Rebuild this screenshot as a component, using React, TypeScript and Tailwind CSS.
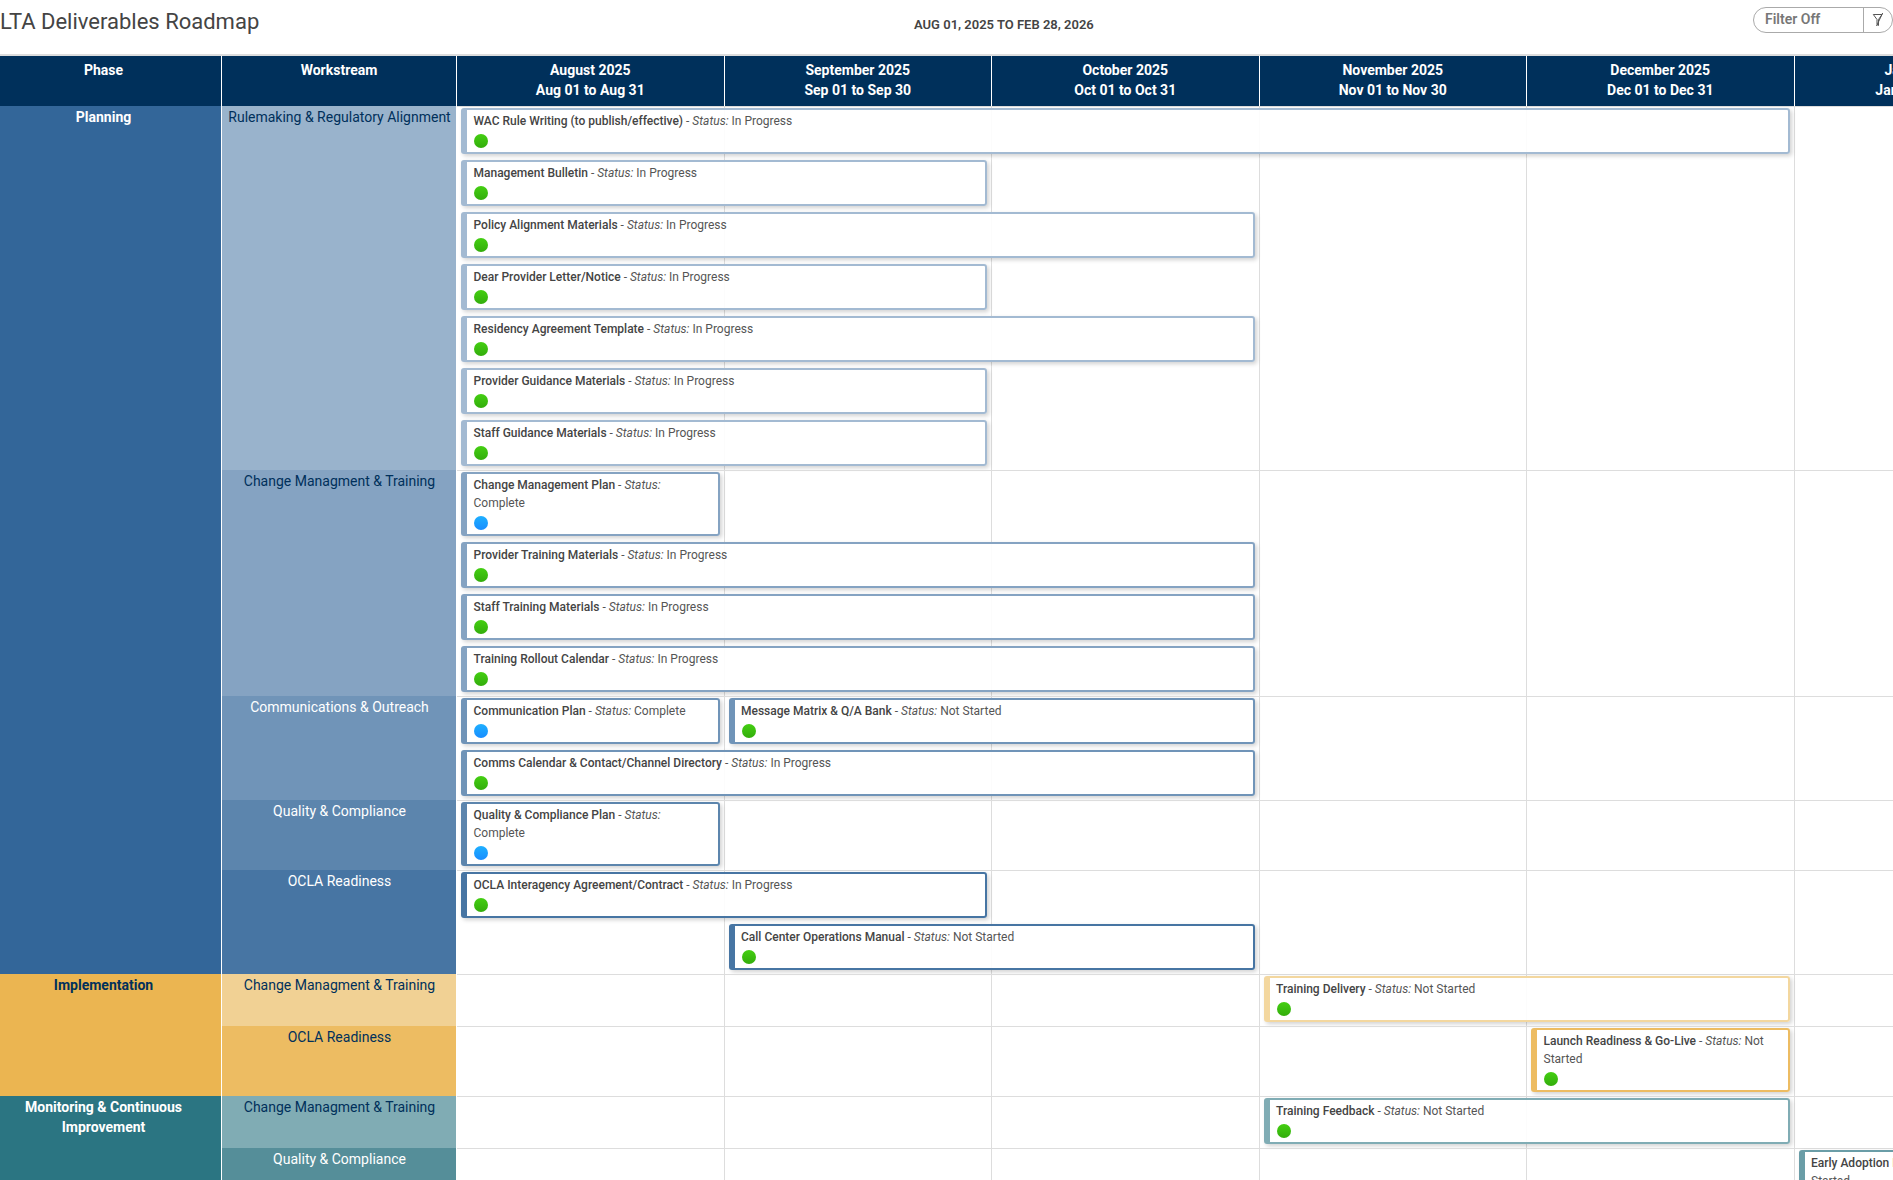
import React from "react";

type Deliverable = {
  title: string;
  status: string;
  start: number;
  span: number;
  tall?: boolean;
};

type Row = { cards: Deliverable[] };

type Workstream = {
  name: string;
  bg: string;
  text: string;
  border: string;
  rows: Row[];
};

const one = (title: string, status: string, start: number, span: number, tall = false): Row => ({
  cards: [{ title, status, start, span, tall }],
});

const START: Record<number, string> = {
  1: "col-start-1",
  2: "col-start-2",
  3: "col-start-3",
  4: "col-start-4",
  5: "col-start-5",
  6: "col-start-6",
  7: "col-start-7",
};

const SPAN: Record<number, string> = {
  1: "col-span-1",
  2: "col-span-2",
  3: "col-span-3",
  4: "col-span-4",
  5: "col-span-5",
};

const months = [
  ["August 2025", "Aug 01 to Aug 31"],
  ["September 2025", "Sep 01 to Sep 30"],
  ["October 2025", "Oct 01 to Oct 31"],
  ["November 2025", "Nov 01 to Nov 30"],
  ["December 2025", "Dec 01 to Dec 31"],
  ["January 2026", "Jan 01 to Jan 31"],
  ["February 2026", "Feb 01 to Feb 28"],
];

const phases = [
  {
    name: "Planning",
    bg: "bg-[#336699]",
    text: "text-white",
    streams: [
      {
        name: "Rulemaking & Regulatory Alignment",
        bg: "bg-[#99b3cc]",
        text: "text-[#00305b]",
        border: "border-[#a3bad2]",
        rows: [
          one("WAC Rule Writing (to publish/effective)", "In Progress", 1, 5),
          one("Management Bulletin", "In Progress", 1, 2),
          one("Policy Alignment Materials", "In Progress", 1, 3),
          one("Dear Provider Letter/Notice", "In Progress", 1, 2),
          one("Residency Agreement Template", "In Progress", 1, 3),
          one("Provider Guidance Materials", "In Progress", 1, 2),
          one("Staff Guidance Materials", "In Progress", 1, 2),
        ],
      },
      {
        name: "Change Managment & Training",
        bg: "bg-[#85a3c2]",
        text: "text-[#00305b]",
        border: "border-[#85a3c2]",
        rows: [
          one("Change Management Plan", "Complete", 1, 1, true),
          one("Provider Training Materials", "In Progress", 1, 3),
          one("Staff Training Materials", "In Progress", 1, 3),
          one("Training Rollout Calendar", "In Progress", 1, 3),
        ],
      },
      {
        name: "Communications & Outreach",
        bg: "bg-[#7094b8]",
        text: "text-white",
        border: "border-[#7094b8]",
        rows: [
          {
            cards: [
              { title: "Communication Plan", status: "Complete", start: 1, span: 1 },
              { title: "Message Matrix & Q/A Bank", status: "Not Started", start: 2, span: 2 },
            ],
          },
          one("Comms Calendar & Contact/Channel Directory", "In Progress", 1, 3),
        ],
      },
      {
        name: "Quality & Compliance",
        bg: "bg-[#5c85ad]",
        text: "text-white",
        border: "border-[#5c85ad]",
        rows: [one("Quality & Compliance Plan", "Complete", 1, 1, true)],
      },
      {
        name: "OCLA Readiness",
        bg: "bg-[#4775a3]",
        text: "text-white",
        border: "border-[#4775a3]",
        rows: [
          one("OCLA Interagency Agreement/Contract", "In Progress", 1, 2),
          one("Call Center Operations Manual", "Not Started", 2, 2),
        ],
      },
    ],
  },
  {
    name: "Implementation",
    bg: "bg-[#ebb551]",
    text: "text-[#00305b]",
    streams: [
      {
        name: "Change Managment & Training",
        bg: "bg-[#f1d194]",
        text: "text-[#00305b]",
        border: "border-[#f3d79f]",
        rows: [one("Training Delivery", "Not Started", 4, 2)],
      },
      {
        name: "OCLA Readiness",
        bg: "bg-[#edbc62]",
        text: "text-[#00305b]",
        border: "border-[#edbc62]",
        rows: [one("Launch Readiness & Go-Live", "Not Started", 5, 1, true)],
      },
    ],
  },
  {
    name: "Monitoring & Continuous Improvement",
    bg: "bg-[#2b7582]",
    text: "text-white",
    streams: [
      {
        name: "Change Managment & Training",
        bg: "bg-[#80acb4]",
        text: "text-[#00305b]",
        border: "border-[#80acb4]",
        rows: [one("Training Feedback", "Not Started", 4, 2)],
      },
      {
        name: "Quality & Compliance",
        bg: "bg-[#558e99]",
        text: "text-white",
        border: "border-[#6a9da7]",
        rows: [one("Early Adoption Monitoring", "Not Started", 6, 1, true)],
      },
    ],
  },
];

function Card({ card, border }: { card: Deliverable; border: string }) {
  const done = card.status === "Complete";
  return (
    <div
      className={`row-start-1 ${START[card.start]} ${SPAN[card.span]} ml-1 mr-[5px] mt-[2px] mb-1 rounded-[3px] border-2 border-l-[6px] ${border} bg-white/90 pl-[6.5px] pr-2 shadow-[2px_2px_4px_rgba(0,0,0,0.18)] ${
        card.tall ? "h-16" : "h-[46px]"
      }`}
    >
      <div className="pt-0.5 text-xs leading-[18px] text-[#555]">
        <span className="font-medium text-[#444]">{card.title}</span> - <i>Status:</i> {card.status}
      </div>
      <div
        className={`mt-1 ml-[0.5px] h-3.5 w-3.5 rounded-full bg-linear-to-b ${
          done ? "from-[#1fb0ff] to-[#1a8cff]" : "from-[#44cf12] to-[#33ad0c]"
        }`}
      />
    </div>
  );
}

function TimelineRow({ row, first, border }: { row: Row; first: boolean; border: string }) {
  return (
    <div className="grid grid-cols-[repeat(7,267.5px)]">
      {months.map((m, i) => (
        <div
          key={m[0]}
          className={`row-start-1 ${START[i + 1]} border-r border-[#ddd] ${first ? "border-t" : ""}`}
        />
      ))}
      {row.cards.map((card) => (
        <Card key={card.title} card={card} border={border} />
      ))}
    </div>
  );
}

function Stream({ stream }: { stream: Workstream }) {
  return (
    <div className="flex">
      <div className={`w-[235px] shrink-0 border-r border-white pl-[5px] pr-1 pt-px text-center text-sm leading-5 ${stream.bg} ${stream.text}`}>
        {stream.name}
      </div>
      <div>
        {stream.rows.map((row, i) => (
          <TimelineRow key={i} row={row} first={i === 0} border={stream.border} />
        ))}
      </div>
    </div>
  );
}

function App() {
  return (
    <div className="h-[1180px] w-[1893px] overflow-hidden bg-white font-['Roboto',sans-serif]">
      <header className="flex h-14 border-b-2 border-[#ddd]">
        <h1 className="w-[914px] pt-2.5 text-[22px] leading-6 text-[#444]">LTA Deliverables Roadmap</h1>
        <div className="pt-[17px] text-[13px] leading-4 font-semibold text-[#444]">AUG 01, 2025 TO FEB 28, 2026</div>
        <div className="mt-[7px] ml-auto flex h-[26px] w-[140px] rounded-full border border-[#aaa]">
          <div className="w-[109px] pl-[11px] text-sm leading-[22px] font-semibold text-[#777]">Filter Off</div>
          <div className="flex flex-1 items-center justify-center border-l border-[#aaa]">
            <svg width="14" height="16" viewBox="0 0 14 16" fill="none" stroke="#555" strokeWidth="1">
              <path d="M2.3 2.5H11L7.5 7.5V13.5L6 12.5V7.5Z" />
              <path d="M11.7 1L5.5 14" />
            </svg>
          </div>
        </div>
      </header>

      <div className="w-[2329.5px]">
        <div className="flex h-[50px] bg-[#00305b] text-center text-sm leading-5 font-bold text-white">
          <div className="w-[222px] shrink-0 border-r border-white pr-[14px] pt-1">Phase</div>
          <div className="w-[235px] shrink-0 border-r border-white pt-1">Workstream</div>
          <div className="grid grid-cols-[repeat(7,267.5px)]">
            {months.map((m) => (
              <div key={m[0]} className="border-r border-white pt-1">
                <div>{m[0]}</div>
                <div>{m[1]}</div>
              </div>
            ))}
          </div>
        </div>

        {phases.map((phase) => (
          <div key={phase.name} className="flex">
            <div className={`w-[222px] shrink-0 border-r border-white pr-[14px] pt-px text-center text-sm leading-5 font-bold ${phase.bg} ${phase.text}`}>
              {phase.name}
            </div>
            <div>
              {phase.streams.map((stream) => (
                <Stream key={stream.name} stream={stream} />
              ))}
            </div>
          </div>
        ))}
      </div>
    </div>
  );
}

export default App;
